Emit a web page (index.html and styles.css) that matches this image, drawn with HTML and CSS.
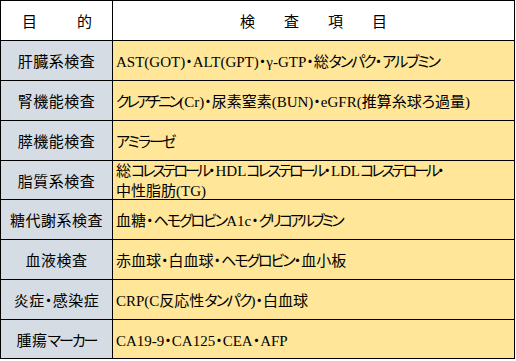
FILE: index.html
```html
<!DOCTYPE html>
<html lang="ja">
<head>
<meta charset="utf-8">
<link rel="stylesheet" href="styles.css">
</head>
<body>
<div class="grid">
  <div class="cell head purpose"><span>目</span><span>的</span></div>
  <div class="cell head items"><span>検</span><span>査</span><span>項</span><span>目</span></div>

  <div class="cell cat">肝臓系検査</div>
  <div class="cell val"><span>AST(GOT)・ALT(GPT)・γ-GTP・総<span class="kana">タンパク</span>・<span class="kana">アルブミン</span></span></div>

  <div class="cell cat">腎機能検査</div>
  <div class="cell val"><span><span class="kana tight">クレアチニン</span>(Cr)・尿素窒素(BUN)・eGFR(推算糸球ろ過量)</span></div>

  <div class="cell cat">膵機能検査</div>
  <div class="cell val"><span><span class="kana">アミラーゼ</span></span></div>

  <div class="cell cat">脂質系検査</div>
  <div class="cell val two"><span>総<span class="kana tight">コレステロール</span>・HDL<span class="kana tight">コレステロール</span>・LDL<span class="kana tight">コレステロール</span>・<br>中性脂肪(TG)</span></div>

  <div class="cell cat">糖代謝系検査</div>
  <div class="cell val"><span>血糖・<span class="kana">ヘモグロビン</span>A1c・<span class="kana tight">グリコアルブミン</span></span></div>

  <div class="cell cat">血液検査</div>
  <div class="cell val"><span>赤血球・白血球・<span class="kana">ヘモグロビン</span>・血小板</span></div>

  <div class="cell cat">炎症・感染症</div>
  <div class="cell val"><span>CRP(C反応性<span class="kana">タンパク</span>)・白血球</span></div>

  <div class="cell cat">腫瘍<span class="kana">マーカー</span></div>
  <div class="cell val"><span>CA19-9・CA125・CEA・AFP</span></div>
</div>
</body>
</html>
```

FILE: styles.css
```css
html, body {
  margin: 0;
  padding: 0;
  background: #ffffff;
}

.grid {
  display: grid;
  width: 513px;
  grid-template-columns: 111px 401px;
  grid-template-rows: 39px 39px 39px 39px 38px 39px 39px 39px 38px;
  gap: 1px;
  padding: 1px;
  background: #000000;
  color: #000000;
  font-family: "Noto Sans CJK JP", sans-serif;
  font-size: 15px;
}

.cell {
  display: flex;
  align-items: center;
}

.head {
  background: #ffffff;
}

.purpose {
  justify-content: space-between;
  padding: 0 20px 0 21px;
}

.items {
  justify-content: space-between;
  padding: 0 127px 0 127px;
}

.cat {
  background: #d6dce4;
  justify-content: center;
  font-feature-settings: "palt";
  letter-spacing: 0.5px;
}

.val {
  background: #ffe699;
  padding-left: 3px;
  font-family: "Liberation Serif", "Noto Sans CJK JP", serif;
  font-feature-settings: "palt";
}

.kana {
  font-family: "Noto Sans CJK JP", sans-serif;
  letter-spacing: -2px;
}

.kana.tight {
  letter-spacing: -3px;
}

.cat .kana {
  letter-spacing: -2px;
}

.two {
  line-height: 20px;
}
```
